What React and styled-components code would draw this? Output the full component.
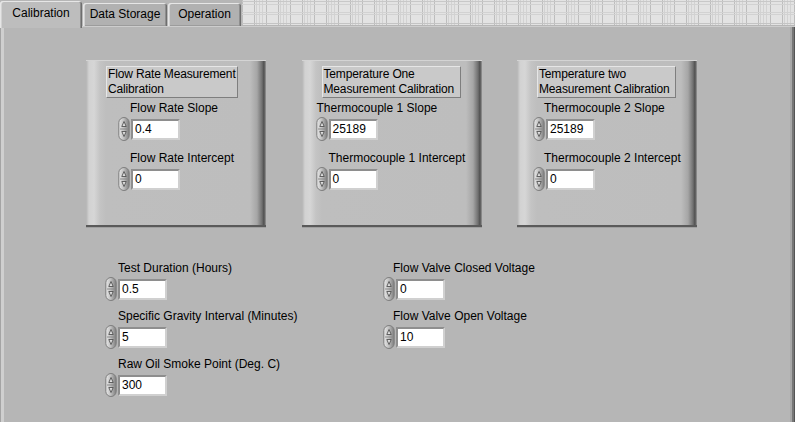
import styled, { createGlobalStyle } from 'styled-components'

const GlobalStyle = createGlobalStyle`
  html, body {
    margin: 0;
    padding: 0;
    background: #b6b6b6;
    overflow: hidden;
  }
  body {
    font-family: "Liberation Sans", Arial, sans-serif;
    font-size: 12px;
    color: #000;
  }
`

const Window = styled.div`
  width: 795px;
  height: 422px;
  display: flex;
  flex-direction: column;
  background: #b6b6b6;
`

const TabStrip = styled.div`
  display: flex;
  align-items: flex-end;
  height: 26px;
  flex: none;
`

const Tab = styled.div`
  position: relative;
  z-index: ${p => (p.$active ? 2 : 1)};
  flex: none;
  width: ${p => p.$width}px;
  height: ${p => (p.$active ? 27 : 23)}px;
  margin-bottom: ${p => (p.$active ? -2 : 0)}px;
  margin-right: 1px;
  box-sizing: border-box;
  display: flex;
  align-items: center;
  justify-content: center;
  padding-bottom: ${p => (p.$active ? 4 : 1)}px;
  background: ${p => (p.$active ? '#bdbdbd' : '#b1b1b1')};
  border-radius: 3px 3px 0 0;
  box-shadow: inset 1px 1px 0 #e6e6e6, inset 2px 0 0 #d2d2d2, inset -1px 0 0 #6e6e6e,
    inset -2px 0 0 #8e8e8e ${p => (p.$active ? '' : ', inset 0 -1px 0 #9c9c9c')};
  white-space: nowrap;
`

const GridFill = styled.div`
  flex: 1;
  align-self: flex-start;
  height: 25px;
  background-color: #e3e3e3;
  background-image:
    linear-gradient(180deg, transparent 0 1px, #c8c8c8 1px 2px, transparent 2px 4px,
      #d2d2d2 4px 5px, transparent 5px 12px, #d2d2d2 12px 13px, transparent 13px 14px,
      #d2d2d2 14px 15px, transparent 15px 23px, #c4c4c4 23px 24px, transparent 24px),
    repeating-linear-gradient(90deg, #bdbdbd 0 1px, transparent 1px 12px),
    linear-gradient(90deg, transparent 0 14px, #d2d2d2 14px 15px, transparent 15px 17px,
      #d2d2d2 17px 18px, transparent 18px 20px, #d2d2d2 20px 21px, transparent 21px);
  background-size: 100% 100%, 100% 100%, 24px 100%;
`

const TabBody = styled.div`
  flex: 1;
  background: #b6b6b6;
  box-shadow: inset 0 1px 0 #cdcdcd, inset 1px 0 0 #a4a4a4, inset 4px 0 0 #cfcfcf,
    inset -1px 0 0 #555, inset -3px 0 0 #777, inset -5px 0 0 #a8a8a8;
`

const PanelRow = styled.div`
  display: flex;
  column-gap: 35.5px;
  padding: 34px 0 0 86px;
`

const Panel = styled.div`
  width: 180px;
  height: 168px;
  flex: none;
  box-sizing: border-box;
  display: flex;
  flex-direction: column;
  align-items: flex-start;
  padding-top: 6px;
  background: linear-gradient(90deg, #b4b4b4 0, #d2d2d2 3px, #d6d6d6 8px, #c4c4c4 14px,
    #bebebe 20px, #bdbdbd calc(100% - 16px), #a6a6a6 calc(100% - 9px),
    #707070 calc(100% - 4px), #4e4e4e calc(100% - 2px), #9a9a9a 100%);
  box-shadow: inset 0 1px 0 #d4d4d4, inset 0 -1px 0 #a0a0a0, inset 0 -3px 0 #5a5a5a;
`

const PanelTitle = styled.div`
  width: ${p => p.$width}px;
  margin-left: 20px;
  box-sizing: border-box;
  padding: 0 1px;
  line-height: 15px;
  letter-spacing: -0.15px;
  background: #c9c9c9;
  border: 1px solid;
  border-color: #e6e6e6 #7e7e7e #7e7e7e #e6e6e6;
  white-space: nowrap;
`

const Field = styled.div`
  display: flex;
  flex-direction: column;
  align-items: flex-start;
  margin-left: ${p => p.$x}px;
  margin-top: ${p => p.$top}px;
`

const FieldLabel = styled.div`
  height: 16px;
  line-height: 16px;
  margin: 0 0 2px ${p => p.$indent}px;
  white-space: nowrap;
`

const FieldRow = styled.div`
  display: flex;
  align-items: center;
  gap: 1px;
  height: 22px;
`

const NumBox = styled.div`
  width: 49px;
  height: 21px;
  box-sizing: border-box;
  padding: 0 2px;
  line-height: 17px;
  background: #fff;
  border: 2px solid;
  border-color: #8e8e8e #d0d0d0 #d0d0d0 #8e8e8e;
`

const BottomArea = styled.div`
  display: flex;
  margin-top: 32px;
  padding-left: 105px;
`

const Column = styled.div`
  width: ${p => p.$width}px;
  display: flex;
  flex-direction: column;
`

function Spinner() {
  return (
    <svg width="12" height="24" viewBox="0 0 12 24">
      <defs>
        <linearGradient id="spin" x1="0" x2="1">
          <stop offset="0" stopColor="#e8e8e8" />
          <stop offset="0.45" stopColor="#c2c2c2" />
          <stop offset="1" stopColor="#7c7c7c" />
        </linearGradient>
      </defs>
      <rect x="0.8" y="0.5" width="10.4" height="23" rx="5.2" fill="url(#spin)" stroke="#7e7e7e" />
      <line x1="2" y1="12" x2="10" y2="12" stroke="#8a8a8a" />
      <path d="M3.8 9.5 L6 4.5 L8.2 9.5 Z" fill="#dedede" stroke="#444" strokeWidth="0.8" />
      <path d="M3.8 14.5 L6 19.5 L8.2 14.5 Z" fill="#dedede" stroke="#444" strokeWidth="0.8" />
    </svg>
  )
}

function Numeric({ label, value, x = 0, indent, top }) {
  return (
    <Field $x={x} $top={top}>
      <FieldLabel $indent={indent}>{label}</FieldLabel>
      <FieldRow>
        <Spinner />
        <NumBox>{value}</NumBox>
      </FieldRow>
    </Field>
  )
}

const panels = [
  {
    title: ['Flow Rate Measurement', 'Calibration'],
    width: 132,
    fields: [
      { label: 'Flow Rate Slope', value: '0.4', x: 32, indent: 12 },
      { label: 'Flow Rate Intercept', value: '0', x: 32, indent: 12 },
    ],
  },
  {
    title: ['Temperature One', 'Measurement Calibration'],
    width: 139,
    fields: [
      { label: 'Thermocouple 1 Slope', value: '25189', x: 14, indent: 1 },
      { label: 'Thermocouple 1 Intercept', value: '0', x: 14, indent: 13 },
    ],
  },
  {
    title: ['Temperature two', 'Measurement Calibration'],
    width: 139,
    fields: [
      { label: 'Thermocouple 2 Slope', value: '25189', x: 16, indent: 11 },
      { label: 'Thermocouple 2 Intercept', value: '0', x: 16, indent: 11 },
    ],
  },
]

const leftFields = [
  { label: 'Test Duration (Hours)', value: '0.5' },
  { label: 'Specific Gravity Interval (Minutes)', value: '5' },
  { label: 'Raw Oil Smoke Point (Deg. C)', value: '300' },
]

const rightFields = [
  { label: 'Flow Valve Closed Voltage', value: '0' },
  { label: 'Flow Valve Open Voltage', value: '10' },
]

export default function App() {
  return (
    <>
      <GlobalStyle />
      <Window>
        <TabStrip>
          <Tab $active $width={82}>Calibration</Tab>
          <Tab $width={84}>Data Storage</Tab>
          <Tab $width={73}>Operation</Tab>
          <GridFill />
        </TabStrip>
        <TabBody>
          <PanelRow>
            {panels.map(p => (
              <Panel key={p.title[0]}>
                <PanelTitle $width={p.width}>
                  {p.title[0]}
                  <br />
                  {p.title[1]}
                </PanelTitle>
                {p.fields.map((f, i) => (
                  <Numeric key={f.label} {...f} top={i === 0 ? 2 : 10} />
                ))}
              </Panel>
            ))}
          </PanelRow>
          <BottomArea>
            <Column $width={278}>
              {leftFields.map((f, i) => (
                <Numeric key={f.label} {...f} indent={13} top={i === 0 ? 0 : 8} />
              ))}
            </Column>
            <Column $width={200}>
              {rightFields.map((f, i) => (
                <Numeric key={f.label} {...f} indent={10} top={i === 0 ? 0 : 8} />
              ))}
            </Column>
          </BottomArea>
        </TabBody>
      </Window>
    </>
  )
}
